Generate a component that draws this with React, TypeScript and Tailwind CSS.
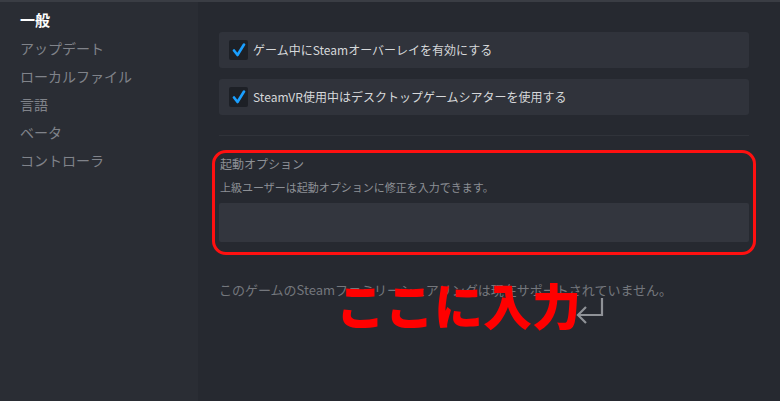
import React from "react";

const font = { fontFamily: '"Noto Sans CJK JP", "Noto Sans", sans-serif' };

function Check() {
  return (
    <div className="w-[19px] h-[20px] bg-[#1d2026] rounded-[2px] flex items-center justify-center shrink-0">
      <svg width="14" height="14" viewBox="0 0 14 14">
        <path d="M2 7.5 L5.5 12 L12 1.5" fill="none" stroke="#1a9fff" strokeWidth="2.6" strokeLinecap="round" strokeLinejoin="round" />
      </svg>
    </div>
  );
}

function Row({ label }: { label: string }) {
  return (
    <div className="h-[36px] bg-[#30333b] rounded-[3px] flex items-center pl-[10px] gap-[5px]">
      <Check />
      <span className="text-[12px] text-[#d6d8da] leading-none">{label}</span>
    </div>
  );
}

export default function App() {
  const items = ["アップデート", "ローカルファイル", "言語", "ベータ", "コントローラ"];
  return (
    <div style={font} className="relative w-[780px] h-[401px] overflow-hidden flex bg-[#262930]">
      <div className="absolute top-0 left-0 right-0 h-[2px] bg-[#3a3d44]" />
      <div className="w-[198px] shrink-0 bg-[#2a2d34] pt-[6px] pl-[20px] flex flex-col">
        <div className="h-[28px] flex items-center text-[15px] font-bold text-white">一般</div>
        {items.map((t) => (
          <div key={t} className="h-[28px] flex items-center text-[14px] text-[#80838a]">
            {t}
          </div>
        ))}
      </div>
      <div className="flex-1 pl-[21px] pr-[31px] pt-[32px] flex flex-col">
        <div className="flex flex-col gap-[11px]">
          <Row label="ゲーム中にSteamオーバーレイを有効にする" />
          <Row label="SteamVR使用中はデスクトップゲームシアターを使用する" />
        </div>
        <div className="mt-[20px] h-[1px] bg-[#30333a]" />
        <div className="mt-[14px] -mx-[7px] border-[3px] border-[#ff1010] rounded-[14px] px-[4px] pt-[1px] pb-[10px]">
          <div className="h-[20px] flex items-center pl-[1px] text-[12px] text-[#8d9096]">起動オプション</div>
          <div className="mt-[3px] h-[20px] flex items-center pl-[1px] text-[11px] text-[#8d9096]">
            上級ユーザーは起動オプションに修正を入力できます。
          </div>
          <div className="mt-[6px] h-[39px] bg-[#33363e] rounded-[2px]" />
        </div>
        <div className="mt-[25px] h-[20px] flex items-center text-[13px] text-[#74777d]">
          このゲームのSteamファミリーシェアリングは現在サポートされていません。
        </div>
      </div>
      <div className="absolute left-[336px] top-[279px]">
        <span className="text-[49px] leading-none font-black text-[#ff0000]">ここに入力</span>
      </div>
      <svg width="32" height="30" viewBox="0 0 32 30" className="absolute left-[574px] top-[296px]">
        <path d="M28 2 V19 H5" fill="none" stroke="#8f9297" strokeWidth="2.2" />
        <path d="M12 11 L4 19 L12 27" fill="none" stroke="#8f9297" strokeWidth="2.2" />
      </svg>
    </div>
  );
}
